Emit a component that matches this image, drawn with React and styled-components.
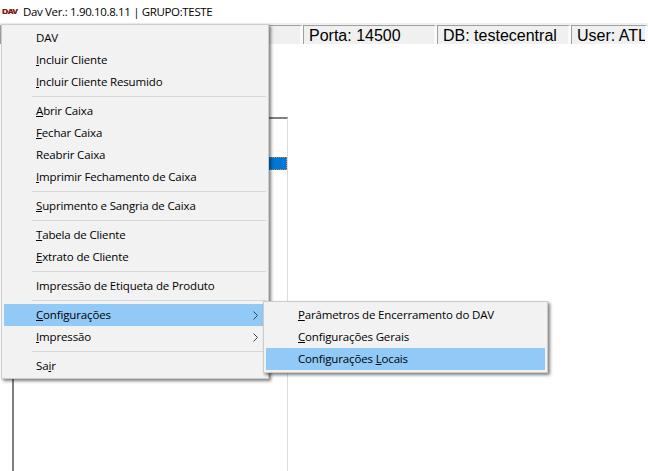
import React from "react";
import styled, { createGlobalStyle } from "styled-components";

const GlobalStyle = createGlobalStyle`
  html, body {
    margin: 0;
    padding: 0;
    background: #fff;
  }
  #root {
    width: 648px;
    height: 471px;
    overflow: hidden;
  }
`;

const mainMenu = [
  [{ label: "DAV" }, { label: "Incluir Cliente", key: 0 }, { label: "Incluir Cliente Resumido", key: 0 }],
  [
    { label: "Abrir Caixa", key: 0 },
    { label: "Fechar Caixa", key: 0 },
    { label: "Reabrir Caixa" },
    { label: "Imprimir Fechamento de Caixa", key: 0 },
  ],
  [{ label: "Suprimento e Sangria de Caixa", key: 0 }],
  [{ label: "Tabela de Cliente", key: 0 }, { label: "Extrato de Cliente", key: 0 }],
  [{ label: "Impressão de Etiqueta de Produto" }],
  [
    { label: "Configurações", key: 0, arrow: true, active: true },
    { label: "Impressão", key: 0, arrow: true },
  ],
  [{ label: "Sair", key: 2 }],
];

const subMenu = [
  { label: "Parâmetros de Encerramento do DAV", key: 0 },
  { label: "Configurações Gerais", key: 0 },
  { label: "Configurações Locais", key: 14, active: true },
];

const Label = ({ label, keyIndex }) => {
  if (keyIndex === undefined) return <ItemText>{label}</ItemText>;
  return (
    <ItemText>
      {label.slice(0, keyIndex)}
      <u>{label[keyIndex]}</u>
      {label.slice(keyIndex + 1)}
    </ItemText>
  );
};

const App = () => {
  return (
    <Page>
      <GlobalStyle />
      <TitleBar>
        <Logo>DAV</Logo>
        <TitleText>Dav Ver.: 1.90.10.8.11 | GRUPO:TESTE</TitleText>
      </TitleBar>
      <StatusBar>
        <StatusPanel $width={303} />
        <StatusPanel $width={134}>Porta: 14500</StatusPanel>
        <StatusPanel $width={134}>DB: testecentral</StatusPanel>
        <StatusPanel $width={77}>User: ATL</StatusPanel>
      </StatusBar>
      <Content>
        <GridPanel>
          <SelectedRow />
        </GridPanel>
      </Content>

      <MainMenu>
        {mainMenu.map((group, i) => (
          <React.Fragment key={i}>
            {i > 0 && <Separator />}
            {group.map((item) => (
              <Item key={item.label} $active={item.active}>
                <Label label={item.label} keyIndex={item.key} />
                {item.arrow && (
                  <Arrow viewBox="0 0 5 9">
                    <path d="M0.5 0.5 L4.5 4.5 L0.5 8.5" />
                  </Arrow>
                )}
              </Item>
            ))}
          </React.Fragment>
        ))}
      </MainMenu>

      <SubMenu>
        {subMenu.map((item) => (
          <Item key={item.label} $active={item.active}>
            <Label label={item.label} keyIndex={item.key} />
          </Item>
        ))}
      </SubMenu>
    </Page>
  );
};

const Page = styled.div`
  position: relative;
  display: flex;
  flex-direction: column;
  width: 648px;
  height: 471px;
  overflow: hidden;
  background-color: #fff;
`;

const TitleBar = styled.div`
  display: flex;
  align-items: center;
  height: 23px;
  flex: none;
  box-sizing: border-box;
  padding-left: 2px;
  background-color: #fff;
`;

const Logo = styled.span`
  width: 16px;
  margin-right: 5px;
  margin-top: -1px;
  font-family: "Liberation Sans", sans-serif;
  font-size: 8px;
  font-weight: bold;
  letter-spacing: -0.3px;
  color: #8c1414;
  text-shadow: 0.5px 0 0 #5a1010;
`;

const TitleText = styled.span`
  font-family: "Open Sans", sans-serif;
  font-size: 11.5px;
  letter-spacing: -0.35px;
  color: #000;
  white-space: nowrap;
`;

const StatusBar = styled.div`
  display: flex;
  flex: none;
  height: 21px;
  box-sizing: border-box;
  padding-top: 2px;
  background-color: #f0f0f0;
`;

const StatusPanel = styled.div`
  flex: none;
  width: ${({ $width }) => $width}px;
  height: 19px;
  box-sizing: border-box;
  padding-left: 5px;
  border-top: 1px solid #a0a0a0;
  border-left: 1px solid #a0a0a0;
  border-right: 3px solid #fafafa;
  font-family: "Liberation Sans", sans-serif;
  font-size: 16px;
  line-height: 19px;
  color: #000;
  white-space: nowrap;
  overflow: hidden;
`;

const Content = styled.div`
  flex: 1;
  padding: 73px 0 0 12px;
  background-color: #fff;
`;

const GridPanel = styled.div`
  width: 276px;
  height: 100%;
  box-sizing: border-box;
  padding-top: 38px;
  border-top: 2px solid #808080;
  border-left: 2px solid #808080;
  border-right: 1px solid #dcdcdc;
`;

const SelectedRow = styled.div`
  height: 13px;
  box-sizing: border-box;
  border: 1px dotted #d08030;
  background-color: #0078d7;
`;

const Menu = styled.div`
  position: absolute;
  box-sizing: border-box;
  background-color: #f2f2f2;
  border: 1px solid #cccccc;
  padding: 2px;
  box-shadow: 2px 2px 3px rgba(0, 0, 0, 0.5);
`;

const MainMenu = styled(Menu)`
  top: 24px;
  left: 1px;
  width: 268px;
  height: 355px;
`;

const SubMenu = styled(Menu)`
  top: 301px;
  left: 263px;
  width: 285px;
  height: 72px;
`;

const Item = styled.div`
  display: flex;
  align-items: center;
  justify-content: space-between;
  height: 22px;
  box-sizing: border-box;
  padding: 0 8px 2px 32px;
  background-color: ${({ $active }) => ($active ? "#91c9f7" : "transparent")};
`;

const ItemText = styled.span`
  font-family: "Open Sans", sans-serif;
  font-size: 11.5px;
  letter-spacing: -0.15px;
  color: #000;
  white-space: nowrap;
`;

const Arrow = styled.svg`
  width: 5px;
  height: 9px;
  margin-top: 2px;
  fill: none;
  stroke: #404040;
  stroke-width: 1;
`;

const Separator = styled.div`
  height: 1px;
  margin: 3px 0 3px 28px;
  background-color: #d7d7d7;
`;

export default App;
